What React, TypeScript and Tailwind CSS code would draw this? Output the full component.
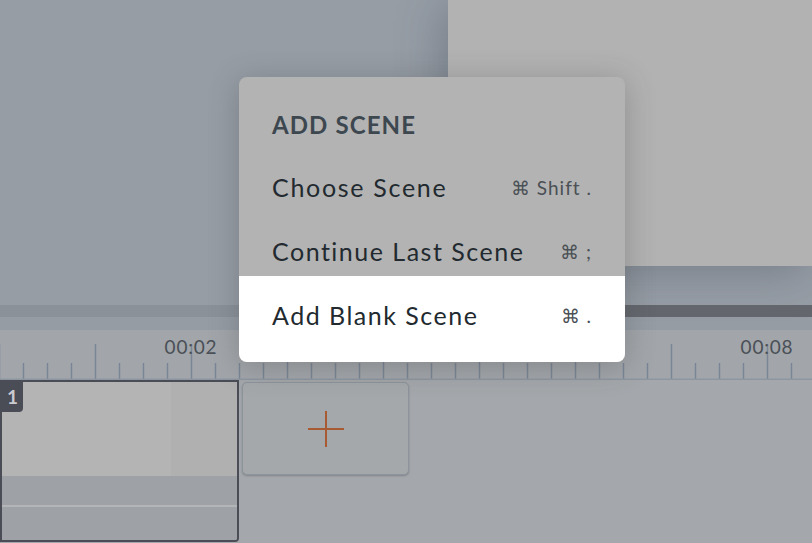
import React from "react";

const ticks = Array.from({ length: 35 }, (_, i) => i * 24 - 1);
const labels = [
  { x: 191, text: "00:02" },
  { x: 383, text: "00:04" },
  { x: 575, text: "00:06" },
  { x: 767, text: "00:08" },
];

const App = () => {
  return (
    <div
      className="relative w-[812px] h-[543px] overflow-hidden bg-[#a4a7ab]"
      style={{ fontFamily: "Lato, 'Open Sans', sans-serif" }}
    >
      {/* stage */}
      <div className="flex h-[305px] bg-[#969da5]">
        <div className="flex-1 bg-[#969da5]" />
        <div className="w-[364px] flex flex-col">
          <div className="h-[266px] bg-[#b2b2b2] shadow-[-6px_6px_40px_rgba(60,70,85,0.35)]" />
          <div className="flex-1" />
        </div>
      </div>

      {/* scrollbar */}
      <div className="flex h-[12px]">
        <div className="w-[600px] bg-[#8a9199]" />
        <div className="flex-1 bg-[#63676d]" />
      </div>
      <div className="h-[13px] bg-[#959ca4]" />

      {/* ruler */}
      <div className="relative h-[50px] bg-[#a2a6aa]">
        <svg className="absolute inset-0" width="812" height="50">
          {ticks.map((x, i) => (
            <line
              key={x}
              x1={x + 0.5}
              x2={x + 0.5}
              y1={i % 4 === 0 ? 14 : 33}
              y2={49}
              stroke="#7a8696"
              strokeWidth="1.5"
            />
          ))}
          <line x1="0" x2="812" y1="49.5" y2="49.5" stroke="#8d96a0" strokeWidth="2" />
        </svg>
        {labels.map((l) => (
          <span
            key={l.text}
            className="absolute top-[5px] -translate-x-1/2 text-[19px] leading-6 tracking-[0.8px] text-[#4a5057]"
            style={{ left: l.x }}
          >
            {l.text}
          </span>
        ))}
      </div>

      {/* scenes track */}
      <div className="flex gap-[3px] items-start">
        <div className="relative w-[239px] h-[162px] rounded-br-[4px] border-2 border-[#4a4d55] overflow-hidden flex flex-col">
          <div className="flex h-[94px]">
            <div className="flex-1 bg-[#b4b4b4]" />
            <div className="w-[66px] bg-[#b0b0b0]" />
          </div>
          <div className="h-[31px] bg-[#9ea2a6] border-b-2 border-[#b2b4b6]" />
          <div className="flex-1 bg-[#9ea2a6]" />
          <div className="absolute left-0 top-0 w-[21px] h-[30px] bg-[#4a4c56] rounded-br-[4px] flex items-center justify-center text-[#c9cbd0] text-[19px] font-bold">
            1
          </div>
        </div>
        <div className="mt-[2px] w-[167px] h-[93px] rounded-[5px] border border-[#8c949c] bg-[#a5a8ab] shadow-[0_1px_2px_rgba(60,70,80,0.35)] flex items-center justify-center">
          <svg width="38" height="38" viewBox="0 0 38 38">
            <path d="M19 1v36M1 19h36" stroke="#a85a33" strokeWidth="2" />
          </svg>
        </div>
      </div>

      {/* popup menu */}
      <div className="absolute left-[239px] top-[77px] w-[386px] h-[285px] rounded-[8px] bg-[#b3b3b3] shadow-[0_4px_30px_rgba(60,60,60,0.3)] flex flex-col">
        <div className="h-[79px] shrink-0 px-[33px] pt-[34px] text-[24px] font-bold text-[#3d474f] leading-7 tracking-[1.1px]">
          ADD SCENE
        </div>
        <div className="h-[64px] shrink-0 flex items-center justify-between px-[33px]">
          <span className="text-[25px] text-[#222a2f] tracking-[1.7px]">Choose Scene</span>
          <span className="text-[19px] text-[#4a5055] tracking-[1px]">⌘ Shift .</span>
        </div>
        <div className="h-[56px] shrink-0 pt-[8px] flex items-center justify-between px-[33px]">
          <span className="text-[25px] text-[#222a2f] tracking-[1.5px]">Continue Last Scene</span>
          <span className="text-[19px] text-[#4a5055] tracking-[1px]">⌘ ;</span>
        </div>
        <div className="h-[86px] shrink-0 pb-[6px] bg-white rounded-b-[8px] flex items-center justify-between px-[33px]">
          <span className="text-[25px] text-[#222a2f] tracking-[1.5px]">Add Blank Scene</span>
          <span className="text-[19px] text-[#4a5055] tracking-[1px]">⌘ .</span>
        </div>
      </div>
    </div>
  );
};

export default App;
